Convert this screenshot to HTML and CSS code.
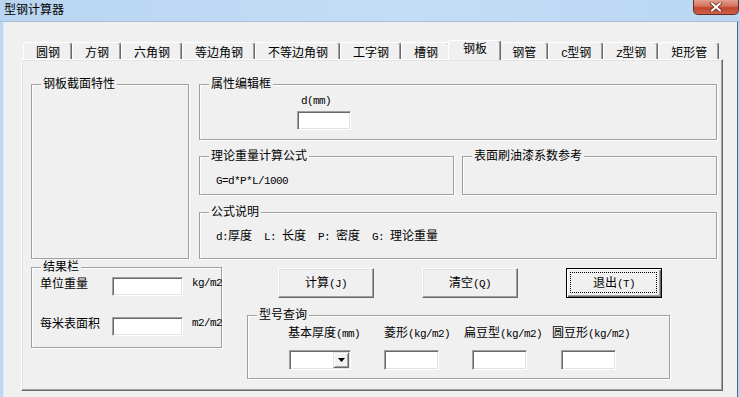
FILE: index.html
```html
<!DOCTYPE html>
<html lang="zh">
<head>
    <meta charset="utf-8">
    <title>型钢计算器</title>
    <link rel="stylesheet" href="styles.css">
</head>
<body>
    <div class="window">
        <div class="titlebar">
            <span class="caption">型钢计算器</span>
            <button class="closeBtn" type="button" aria-label="关闭">
                <svg width="14" height="10" viewBox="0 0 14 10">
                    <path d="M3 1.5 L11 8.5 M11 1.5 L3 8.5" stroke="#6a2a20" stroke-width="3.6" stroke-linecap="square"/>
                    <path d="M3 1.5 L11 8.5 M11 1.5 L3 8.5" stroke="#fff" stroke-width="2" stroke-linecap="square"/>
                </svg>
            </button>
        </div>

        <div class="client">
            <ul class="tabs">
                <li class="tab">圆钢</li>
                <li class="tab">方钢</li>
                <li class="tab">六角钢</li>
                <li class="tab">等边角钢</li>
                <li class="tab">不等边角钢</li>
                <li class="tab">工字钢</li>
                <li class="tab">槽钢</li>
                <li class="tab active">钢板</li>
                <li class="tab">钢管</li>
                <li class="tab"><span class="en">C</span>型钢</li>
                <li class="tab"><span class="en">Z</span>型钢</li>
                <li class="tab">矩形管</li>
            </ul>

            <div class="tabPage">
                <div class="topRow">
                    <div class="group sectionBox">
                        <div class="groupTitle">钢板截面特性</div>
                    </div>
                    <div class="rightCol">
                        <div class="group attrBox">
                            <div class="groupTitle">属性编辑框</div>
                            <div class="attrLabel"><span class="en">d(mm)</span></div>
                            <input class="edit attrInput" type="text">
                        </div>
                        <div class="pairRow">
                            <div class="group formulaBox">
                                <div class="groupTitle">理论重量计算公式</div>
                                <div class="boxText"><span class="en">G=d*P*L/1000</span></div>
                            </div>
                            <div class="group formulaBox">
                                <div class="groupTitle">表面刷油漆系数参考</div>
                            </div>
                        </div>
                        <div class="group noteBox">
                            <div class="groupTitle">公式说明</div>
                            <div class="boxText"><span class="en">d:</span>厚度<span class="en">  L: </span>长度<span class="en">  P: </span>密度<span class="en">  G: </span>理论重量</div>
                        </div>
                    </div>
                </div>

                <div class="bottomRow">
                    <div class="group resultBox">
                        <div class="groupTitle">结果栏</div>
                        <div class="resultRow">
                            <span class="resultLabel">单位重量</span>
                            <input class="edit resultInput" type="text">
                            <span class="unit en">kg/m2</span>
                        </div>
                        <div class="resultRow second">
                            <span class="resultLabel">每米表面积</span>
                            <input class="edit resultInput" type="text">
                            <span class="unit en">m2/m2</span>
                        </div>
                    </div>

                    <div class="actionCol">
                        <div class="buttons">
                            <button class="btn" type="button">计算<span class="en">(J)</span></button>
                            <button class="btn" type="button">清空<span class="en">(Q)</span></button>
                            <button class="btn btnDefault" type="button">退出<span class="en">(T)</span></button>
                        </div>
                        <div class="group queryBox">
                            <div class="groupTitle">型号查询</div>
                            <div class="queryGrid">
                                <span>基本厚度<span class="en">(mm)</span></span>
                                <span>菱形<span class="en">(kg/m2)</span></span>
                                <span>扁豆型<span class="en">(kg/m2)</span></span>
                                <span>圆豆形<span class="en">(kg/m2)</span></span>
                                <div class="edit combo">
                                    <span class="dropBtn">
                                        <svg width="7" height="4" viewBox="0 0 7 4"><path d="M0 0 H7 L3.5 4 Z" fill="#000"/></svg>
                                    </span>
                                </div>
                                <input class="edit queryInput" type="text">
                                <input class="edit queryInput shift8" type="text">
                                <input class="edit queryInput shift9" type="text">
                            </div>
                        </div>
                    </div>
                </div>
            </div>
        </div>
    </div>
</body>
</html>
```

FILE: styles.css
```css
* {
    box-sizing: border-box;
}
body {
    margin: 0;
    width: 740px;
    height: 397px;
    overflow: hidden;
    background-color: #f0f0f0;
    font: 12px/14px "Noto Sans CJK SC", sans-serif;
    color: #000;
}
.window {
    width: 740px;
    height: 397px;
    display: flex;
    flex-direction: column;
}

/* title bar */
.titlebar {
    height: 22px;
    flex-shrink: 0;
    display: flex;
    justify-content: space-between;
    align-items: flex-start;
    background: linear-gradient(to right, #b9d5f2, #c4ddf6 55%, #bad6f3);
    border-bottom: 1px solid #a8bed6;
}
.caption {
    padding: 2px 0 0 4px;
}
.closeBtn {
    width: 46px;
    height: 15px;
    margin-right: 1px;
    padding: 0;
    display: flex;
    align-items: center;
    justify-content: center;
    border: 1px solid #6e2a22;
    border-top: none;
    border-radius: 0 0 5px 5px;
    background: linear-gradient(#e4a091, #d4705b 45%, #c2442e 55%, #cc6149);
}

/* client area */
.client {
    flex: 1;
    padding-top: 18px;
    border-left: 3px solid #bed7f2;
    border-right: 2px solid #bcd4ee;
    box-shadow: inset 1px 0 0 #dfe6ee, inset -1px 0 0 #52647a;
}
.tabs {
    display: flex;
    align-items: flex-end;
    height: 19px;
    margin: 0 0 0 20px;
    padding: 0;
    list-style: none;
}
.tab {
    height: 17px;
    padding: 1px 11px 0 12px;
    border: 1px solid #fff;
    border-bottom: none;
    border-right-color: #696969;
    border-radius: 3px 3px 0 0;
    box-shadow: inset -1px 0 0 #a0a0a0;
    line-height: 15px;
    white-space: nowrap;
}
.tab.active {
    position: relative;
    z-index: 1;
    height: 20px;
    margin: 0 -2px -1px -2px;
    padding: 0 13px 0 14px;
    line-height: 14px;
    background-color: #f0f0f0;
}
.tabPage {
    width: 702px;
    height: 332px;
    margin-left: 18px;
    padding: 24px 0 0 9px;
    border: 1px solid;
    border-color: #fff #696969 #696969 #fff;
    box-shadow: inset -1px -1px 0 #a0a0a0, inset 1px 1px 0 #e3e3e3;
}

/* group boxes */
.group {
    flex-shrink: 0;
    border: 1px solid #a0a0a0;
    box-shadow: 1px 1px 0 #fff, inset 1px 1px 0 #fff;
}
.groupTitle {
    display: table;
    margin: -9px 0 0 9px;
    padding: 0 2px;
    background-color: #f0f0f0;
}
.en {
    font-family: "Liberation Mono", monospace;
    font-size: 11px;
    letter-spacing: -0.6px;
    white-space: pre;
}

.topRow {
    display: flex;
    gap: 10px;
}
.sectionBox {
    width: 158px;
    height: 175px;
}
.rightCol {
    width: 518px;
    display: flex;
    flex-direction: column;
}
.attrBox {
    height: 56px;
    margin-bottom: 16px;
}
.attrLabel {
    margin: 2px 0 0 101px;
}
.attrInput {
    display: block;
    width: 54px;
    height: 19px;
    margin: 3px 0 0 97px;
}
.pairRow {
    display: flex;
    gap: 8px;
    margin-bottom: 17px;
}
.formulaBox {
    width: 255px;
    height: 39px;
}
.noteBox {
    height: 47px;
}
.boxText {
    margin: 10px 0 0 16px;
    white-space: nowrap;
}

/* lower part */
.bottomRow {
    display: flex;
    align-items: flex-start;
    margin-top: 8px;
}
.resultBox {
    width: 191px;
    height: 81px;
}
.resultRow {
    display: flex;
    align-items: flex-start;
    margin-top: 4px;
    padding-left: 8px;
}
.resultRow.second {
    margin-top: 21px;
}
.resultLabel {
    width: 72px;
    flex-shrink: 0;
    margin-top: -1px;
}
.resultInput {
    width: 71px;
    height: 19px;
    flex-shrink: 0;
}
.unit {
    flex-shrink: 0;
    margin: -1px 0 0 9px;
}

.actionCol {
    margin-left: 25px;
    padding-top: 1px;
}
.buttons {
    display: flex;
    gap: 48px;
    padding-left: 31px;
}
.btn {
    width: 96px;
    height: 30px;
    padding: 0;
    font: inherit;
    color: #000;
    background-color: #f0f0f0;
    border: 1px solid;
    border-color: #fff #696969 #696969 #fff;
    box-shadow: inset -1px -1px 0 #a0a0a0, inset 1px 1px 0 #e3e3e3;
}
.btnDefault {
    position: relative;
    border-color: #000;
    box-shadow: inset 1px 1px 0 #fff, inset -1px -1px 0 #696969, inset -2px -2px 0 #a0a0a0;
}
.btnDefault::after {
    content: "";
    position: absolute;
    top: 3px;
    left: 3px;
    right: 4px;
    bottom: 4px;
    border: 1px dotted #000;
}

.queryBox {
    width: 423px;
    height: 64px;
    margin-top: 17px;
}
.queryGrid {
    display: grid;
    grid-template-columns: 96px 80px 88px 88px;
    row-gap: 9px;
    margin-top: 4px;
    padding-left: 40px;
    white-space: nowrap;
}

/* edit controls */
.edit {
    padding: 0;
    font: inherit;
    background-color: #fff;
    border: 1px solid;
    border-color: #a0a0a0 #fff #fff #a0a0a0;
    box-shadow: inset 1px 1px 0 #696969, inset -1px -1px 0 #e3e3e3;
}
.queryInput {
    width: 55px;
    height: 20px;
}
.shift8 {
    margin-left: 8px;
}
.shift9 {
    margin-left: 9px;
}
.combo {
    width: 62px;
    height: 20px;
    margin-left: 1px;
    padding: 1px 1px 1px 0;
    display: flex;
    justify-content: flex-end;
}
.dropBtn {
    width: 16px;
    height: 16px;
    display: flex;
    align-items: center;
    justify-content: center;
    background-color: #f0f0f0;
    border: 1px solid;
    border-color: #e3e3e3 #696969 #696969 #e3e3e3;
    box-shadow: inset 1px 1px 0 #fff, inset -1px -1px 0 #a0a0a0;
}
```
